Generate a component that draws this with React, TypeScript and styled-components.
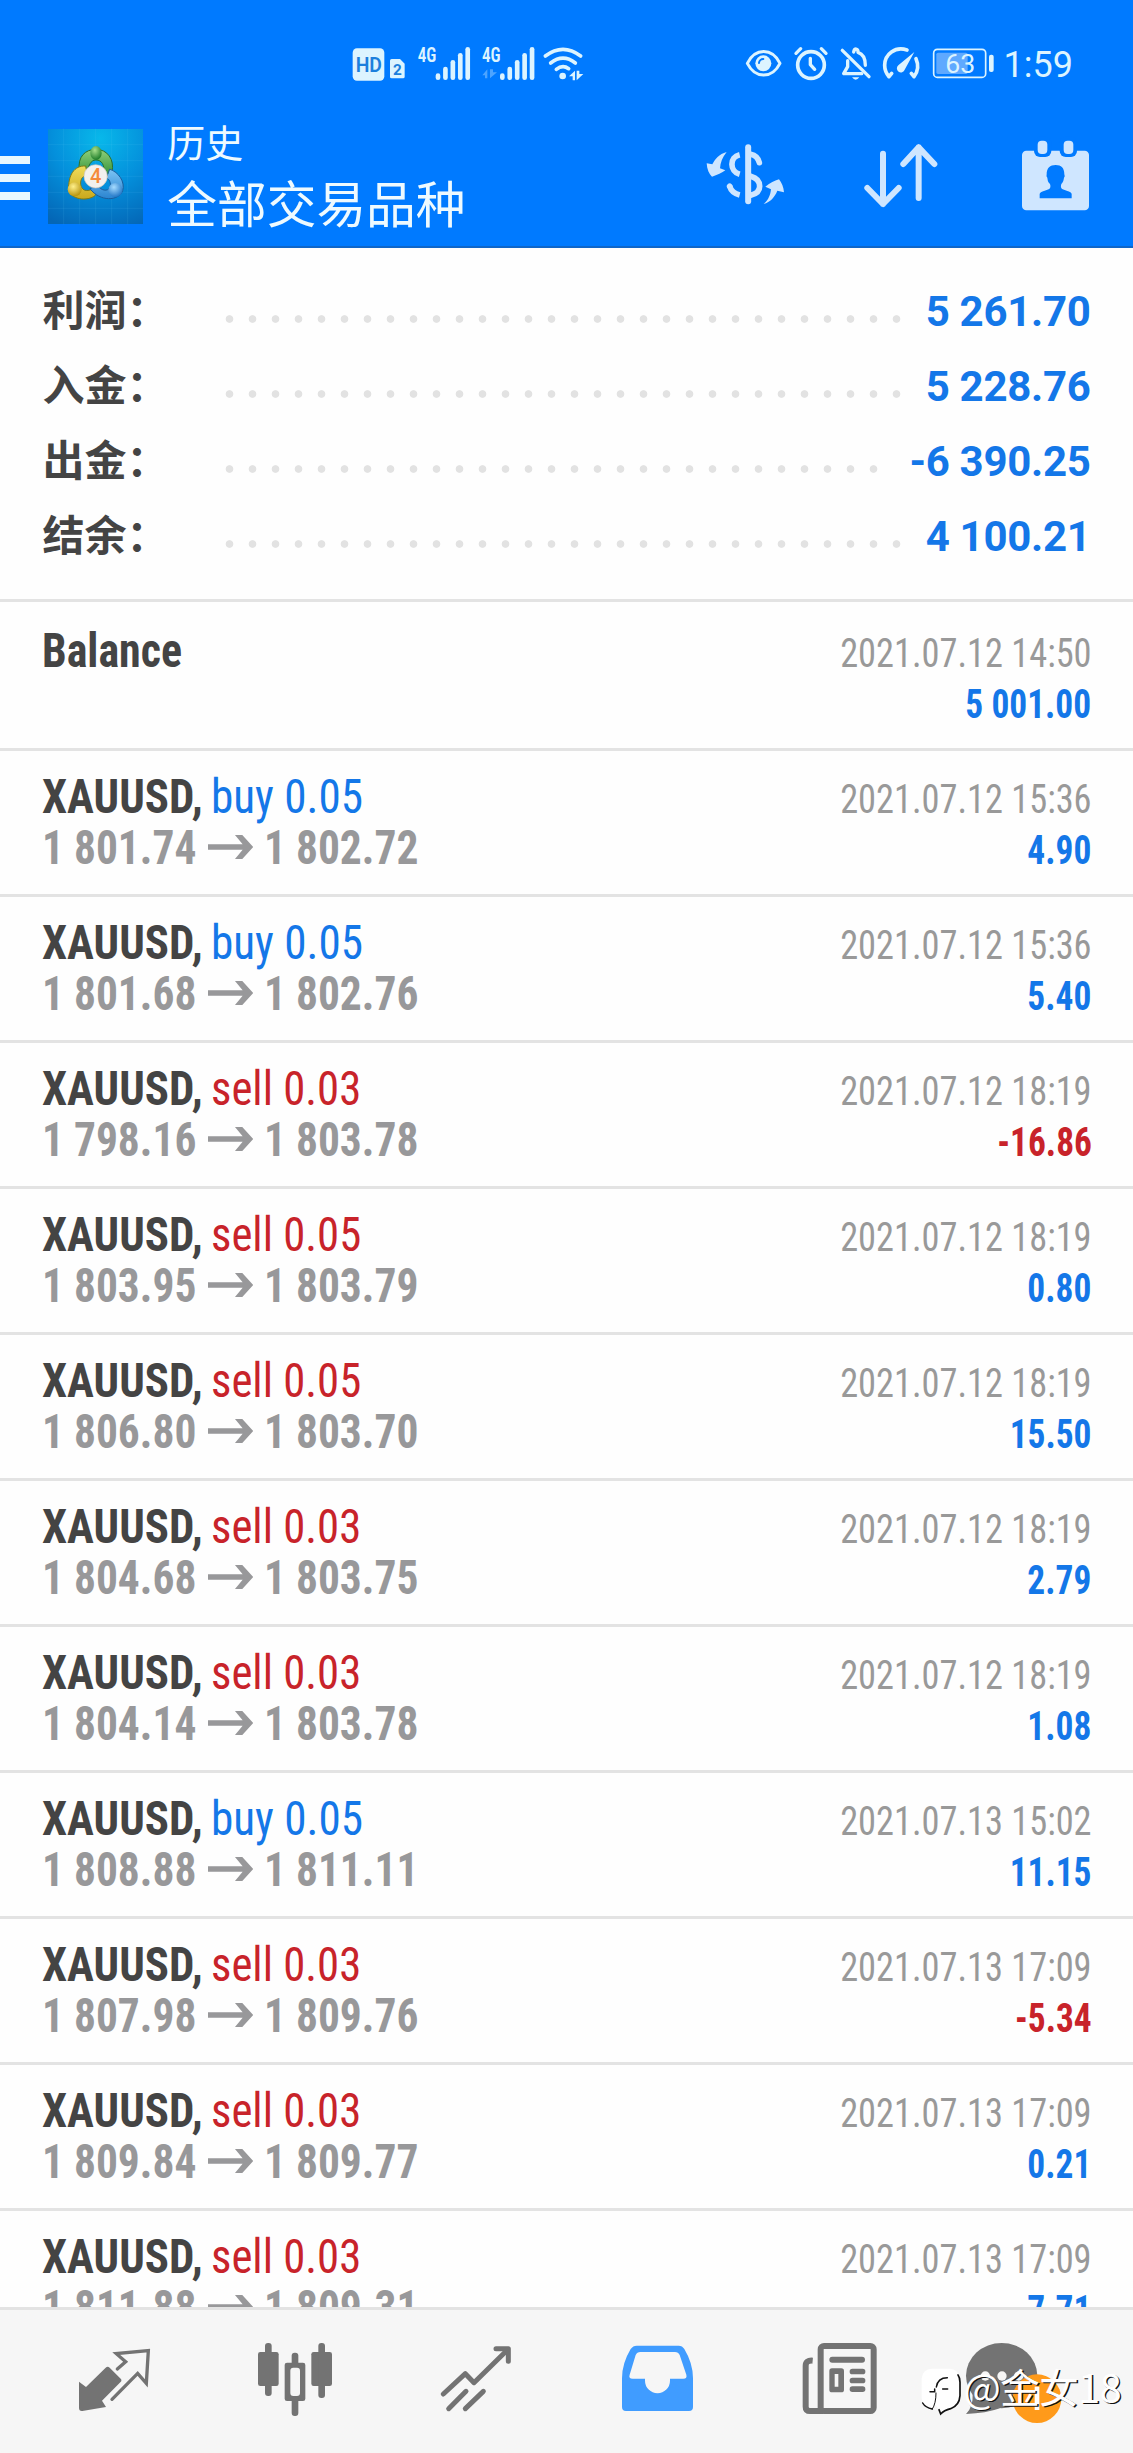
import React from "react";
import styled, { createGlobalStyle } from "styled-components";

const BLUE = "#007aff";
const TINT = "#cfe6ff";
const STATUS = "#dcf4ff";
const GRAY = "#737373";
const BAR_BG = "#f6f6f6";

const condensed = `"Roboto Condensed", Roboto, "Noto Sans CJK SC", sans-serif`;
const regular = `Roboto, "Noto Sans CJK SC", sans-serif`;

const GlobalStyle = createGlobalStyle`
  * { box-sizing: border-box; }
  body { margin: 0; background: #fff; font-family: ${regular}; }
  svg { display: block; flex: none; }
`;

const Screen = styled.div`
  position: relative;
  display: flex;
  flex-direction: column;
  width: 1133px;
  height: 2453px;
  overflow: hidden;
  background: #fefefe;
`;

const TopBar = styled.header`
  flex: none;
  height: 248px;
  background: ${BLUE};
  border-bottom: 2px solid #0f66c9;
`;

const StatusBar = styled.div`
  display: flex;
  height: 110px;
  padding: 30px 0 0 350px;
`;

const StatusGroup = styled.div`
  display: flex;
  & + & {
    margin-left: 155px;
  }
`;

const Clock = styled.span`
  margin-left: 3.5px;
  font-size: 36px;
  line-height: 71px;
  color: ${STATUS};
`;

const TitleBar = styled.div`
  display: flex;
  height: 138px;
`;

const MenuButton = styled.div`
  display: flex;
  flex-direction: column;
  gap: 10px;
  width: 48px;
  padding-top: 46px;
`;

const MenuLine = styled.span`
  width: 30px;
  height: 8px;
  background: #e8f8ff;
`;

const Titles = styled.div`
  margin-left: 24px;
  padding-top: 8px;
  color: #eefaff;
  white-space: nowrap;
  font-family: "Noto Sans CJK SC", sans-serif;
`;

const Caption = styled.div`
  font-size: 38px;
  line-height: 46px;
`;

const Heading = styled.div`
  margin-top: 4.5px;
  font-size: 49.7px;
  line-height: 64px;
`;

const Actions = styled.div`
  display: flex;
  margin-left: auto;
`;

const Summary = styled.section`
  flex: none;
  height: 354px;
  padding: 22px 42.5px 0 42.5px;
  border-bottom: 3px solid #e3e3e3;
`;

const SummaryRow = styled.div`
  display: flex;
  align-items: baseline;
  height: 75px;
  line-height: 75px;
  font-size: 42px;
  font-weight: 700;
`;

const SummaryLabel = styled.span`
  width: 175.3px;
  white-space: nowrap;
  color: #444;
  font-family: "Noto Sans CJK SC", sans-serif;
`;

const Dots = styled.span<{ $count: number }>`
  align-self: flex-start;
  width: ${(p) => p.$count * 23}px;
  height: 8px;
  margin-top: 45px;
  background: radial-gradient(circle at center, #e2e2e2 3.4px, transparent 4.2px) 0 0 / 23px 8px repeat-x;
`;

const SummaryValue = styled.span`
  margin-left: auto;
  white-space: nowrap;
  letter-spacing: -0.3px;
  color: #1477e8;
`;

const List = styled.main`
  flex: 1;
  min-height: 0;
  overflow: hidden;
  font-family: ${condensed};
  line-height: 51px;
  white-space: nowrap;
`;

const Row = styled.article<{ $first?: boolean }>`
  display: flex;
  justify-content: space-between;
  align-items: baseline;
  height: ${(p) => (p.$first ? 149 : 146)}px;
  padding: ${(p) => (p.$first ? 23 : 20)}px 41.5px 0 42px;
  border-bottom: 3px solid #e3e3e3;
`;

const Line = styled.div`
  display: flex;
  align-items: baseline;
  height: 51px;
`;

const RightCell = styled.div`
  display: flex;
  flex-direction: column;
  align-items: flex-end;
  font-size: 40px;
`;

const LeftCell = styled.div`
  font-size: 48px;
`;

const Squeezed = styled.span<{ $x: number }>`
  display: block;
  transform: scaleX(${(p) => p.$x});
  transform-origin: left;
`;

const Symbol = styled(Squeezed)`
  width: 169px;
  font-weight: 700;
  color: #444;
`;

const Side = styled(Squeezed)<{ $kind: "buy" | "sell" }>`
  color: ${(p) => (p.$kind === "buy" ? "#1477e8" : "#c8232a")};
`;

const Price = styled(Squeezed)`
  width: 155.5px;
  font-weight: 700;
  color: #98989a;
`;

const Time = styled(Squeezed)`
  transform-origin: right;
  color: #999;
`;

const Profit = styled(Squeezed)<{ $loss: boolean }>`
  transform-origin: right;
  font-weight: 700;
  color: ${(p) => (p.$loss ? "#c8232a" : "#1477e8")};
`;

const ArrowIcon = styled.svg`
  margin: 0 11px 0 10px;
`;

const TabBar = styled.nav`
  display: flex;
  flex: none;
  height: 146px;
  padding-left: 24px;
  border-top: 3px solid #e3e3e3;
  background: ${BAR_BG};
`;

const Watermark = styled.div`
  position: absolute;
  left: 919px;
  top: 2360px;
  display: flex;
  align-items: flex-start;
  color: #fff;
  font-family: "Noto Sans CJK SC", sans-serif;
  font-size: 39.5px;
  line-height: 52px;
  white-space: nowrap;
  text-shadow: 1.3px 1.3px 0 #111;
`;

const WatermarkText = styled.span`
  margin-left: -1.5px;
  letter-spacing: -0.5px;
`;

const WatermarkSvg = styled.svg`
  margin-top: 5px;
`;

/* Icons are drawn on a 3x grid; the view box starts at (x, y). */
type CellProps = { x: number; y?: number; w: number; h: number; children: React.ReactNode };
const Cell = ({ x, y = 0, w, h, children }: CellProps) => (
  <svg width={w / 3} height={h / 3} viewBox={`${x} ${y} ${w} ${h}`} fill="none" strokeLinecap="round" strokeLinejoin="round">
    {children}
  </svg>
);

const Signal = ({ dx, data }: { dx: number; data?: boolean }) => (
  <g transform={`translate(${dx} 0)`} fill={STATUS}>
    <text x="263" y="95" fontFamily="Roboto Condensed" fontWeight="600" fontSize="60" textLength="56" lengthAdjust="spacingAndGlyphs">4G</text>
    {[130, 110, 90, 69, 51].map((top, i) => (
      <rect key={top} x={317 + i * 22.3} y={top} width="14" height={150 - top} rx="7" />
    ))}
    {data && <path d="M264 136L279 118V145H272V136ZM287 118V145L308 127H296V118Z" opacity=".35" />}
  </g>
);

const StatusIcons = () => (
  <StatusBar>
    <StatusGroup>
      <Cell x={60} w={110} h={210}>
        <rect x="68" y="55" width="95" height="97" rx="13" fill={STATUS} />
        <text x="77" y="125" fill="#1c7fdc" fontFamily="Roboto" fontWeight="600" fontSize="61" textLength="79" lengthAdjust="spacingAndGlyphs">HD</text>
      </Cell>
      <Cell x={170} w={70} h={210}>
        <path d="M184 87H209L223 101V140Q223 145 218 145H184Q179 145 179 140V92Q179 87 184 87Z" fill={STATUS} />
        <text x="188" y="136" fill="#1c7fdc" fontFamily="Roboto" fontWeight="700" fontSize="46">2</text>
      </Cell>
      <Cell x={240} w={200} h={210}><Signal dx={0} /></Cell>
      <Cell x={440} w={185} h={210}><Signal dx={192} data /></Cell>
      <Cell x={625} w={150} h={210}>
        <g stroke={STATUS} strokeWidth="11">
          <path d="M647 78Q700 38 753 78M663 99Q700 70 737 99M680 118Q699 103 717 116" />
        </g>
        <circle cx="699" cy="138" r="10" fill={STATUS} />
        <path d="M718 139L736 122V151H729V139ZM741 122V151L761 132H749V122Z" fill={STATUS} />
      </Cell>
    </StatusGroup>
    <StatusGroup>
      <Cell x={40} w={130} h={210}>
        <path d="M53 100C77 53 127 53 151 100C127 147 77 147 53 100Z" stroke={STATUS} strokeWidth="9" />
        <circle cx="101" cy="100" r="24" fill={STATUS} />
        <path d="M88 99A13 13 0 0 1 101 87" stroke={BLUE} strokeWidth="6" />
      </Cell>
      <Cell x={170} w={135} h={210}>
        <g stroke={STATUS} strokeWidth="11">
          <circle cx="242" cy="105" r="40" />
          <path d="M197 70L211 56M287 70L273 56" strokeWidth="10" />
          <path d="M240 85V104L253 118" strokeWidth="10" />
        </g>
      </Cell>
      <Cell x={305} w={135} h={210}>
        <g stroke={STATUS} strokeWidth="10">
          <path d="M336 61L416 140" />
          <path d="M352 92V110L340 131H394" />
          <path d="M370 66C372 54 384 54 383 67C399 72 405 84 405 106" />
        </g>
        <path d="M365 142H387Q376 156 365 142Z" fill={STATUS} />
      </Cell>
      <Cell x={440} w={145} h={210}>
        <g stroke={STATUS} strokeWidth="11">
          <path d="M530 60C495 48 463 72 463 106C463 120 468 131 476 140L484 130" />
          <path d="M557 86C565 104 563 124 551 140L543 130" />
        </g>
        <path d="M552 66L523 119A12 12 0 1 1 504 106Z" fill={STATUS} />
      </Cell>
      <Cell x={585} w={225} h={210}>
        <rect x="611" y="58" width="156" height="84" rx="11" stroke={STATUS} strokeWidth="5" />
        <rect x="619" y="68" width="94" height="64" rx="5" fill="#7fb9ff" opacity=".75" />
        <rect x="777" y="74" width="14" height="52" rx="6" fill={STATUS} />
        <text x="646" y="128" fill={STATUS} fontFamily="Roboto" fontSize="80">63</text>
      </Cell>
      <Clock>1:59</Clock>
    </StatusGroup>
  </StatusBar>
);

const AppLogo = () => (
  <Cell x={144} w={286} h={414}>
    <defs>
      <radialGradient id="sky" cx=".55" cy=".1" r="1">
        <stop offset="0" stopColor="#08b8ea" />
        <stop offset=".5" stopColor="#0490dc" />
        <stop offset="1" stopColor="#0466b6" />
      </radialGradient>
      <linearGradient id="green" x2="0" y2="1"><stop stopColor="#8fd07a" /><stop offset="1" stopColor="#2f8f35" /></linearGradient>
      <linearGradient id="gold" x2="0" y2="1"><stop stopColor="#f0dc5a" /><stop offset="1" stopColor="#c9a81c" /></linearGradient>
      <linearGradient id="azure" x2="0" y2="1"><stop stopColor="#7cc4f4" /><stop offset="1" stopColor="#2a84d0" /></linearGradient>
      <radialGradient id="gball" cx=".4" cy=".3" r=".7"><stop stopColor="#a8e08c" /><stop offset="1" stopColor="#1f7d2a" /></radialGradient>
      <radialGradient id="yball" cx=".4" cy=".3" r=".7"><stop stopColor="#fff08a" /><stop offset="1" stopColor="#b8940e" /></radialGradient>
      <radialGradient id="bball" cx=".4" cy=".3" r=".7"><stop stopColor="#a6dcff" /><stop offset="1" stopColor="#2478c8" /></radialGradient>
    </defs>
    <rect x="144" y="57" width="285" height="285" fill="url(#sky)" />
    <path d="M191 57V342M239 57V342M287 57V342M335 57V342M383 57V342M144 104H429M144 152H429M144 199H429M144 247H429M144 295H429" stroke="#6fd0f5" strokeOpacity=".18" strokeWidth="2" />
    <path d="M238 180C232 140 256 118 288 118C322 118 344 148 336 186C330 204 310 204 312 190C314 166 306 150 288 150C270 150 268 170 262 176Z" fill="url(#green)" stroke="#2a6d2a" strokeWidth="3" />
    <path d="M256 168C222 166 204 196 206 240C212 268 262 276 286 256C290 246 280 236 270 240C254 246 240 236 242 216C244 200 254 196 262 198Z" fill="url(#gold)" stroke="#7f7a14" strokeWidth="3" />
    <path d="M330 178C356 186 376 216 368 242C356 274 300 276 270 236L292 226C304 242 322 246 330 232C334 220 328 206 320 204Z" fill="url(#azure)" stroke="#1a5c9c" strokeWidth="3" />
    <ellipse cx="288" cy="129" rx="17" ry="21" fill="url(#gball)" />
    <circle cx="224" cy="238" r="21" fill="url(#yball)" />
    <circle cx="346" cy="240" r="21" fill="url(#bball)" />
    <circle cx="287" cy="199" r="35" fill="#f3f1ee" stroke="#c9c4bd" strokeWidth="2" />
    <text x="287" y="220" textAnchor="middle" fill="#f58a3c" fontFamily="Roboto" fontWeight="500" fontSize="60">4</text>
  </Cell>
);

const HeaderActions = () => (
  <Actions>
    <Cell x={70} w={370} h={414}>
      <g fill={TINT}>
        <path d="M141 126C118 132 106 148 98 163L81 160C82 178 88 192 97 200C112 196 128 188 137 181L121 175C122 158 128 142 141 126Z" />
        <path d="M252 282C268 268 272 254 274 238L257 230C272 218 284 212 298 208C306 218 312 232 313 247L293 242C285 262 272 276 252 282Z" />
      </g>
      <g stroke={TINT} strokeWidth="17">
        <path d="M180 134C149 141 149 184 180 193M180 255C164 251 154 243 150 229" strokeLinecap="butt" />
        <path d="M150 229L150.1 229.1" />
        <path d="M205.500 112V274" strokeWidth="18" />
        <path d="M213 133C228 136 236 146 239 158M213 199C231 204 240 215 240 229C240 243 230 252 213 256" />
      </g>
    </Cell>
    <Cell x={440} w={460} h={414}>
      <path d="M608 131V282M561 234L608 282L655 234M715 264V112M669 162L715 112L762 162" stroke={TINT} strokeWidth="18" />
    </Cell>
    <Cell x={900} w={459} h={414}>
      <rect x="1026" y="122" width="201" height="179" rx="13" fill={TINT} />
      <rect x="1062" y="80" width="52" height="61" rx="18" fill={BLUE} />
      <rect x="1139" y="80" width="52" height="61" rx="18" fill={BLUE} />
      <rect x="1073" y="92" width="29" height="40" rx="12" fill={TINT} />
      <rect x="1151" y="92" width="29" height="40" rx="12" fill={TINT} />
      <path d="M1079 265V252Q1079 246 1094 242L1106 238Q1114 234 1110 222C1103 216 1103 209 1102 203Q1098 200 1100 193C1100 174 1110 165 1127 165C1144 165 1153 174 1153 193Q1156 200 1152 203C1151 209 1150 216 1144 222Q1140 234 1148 238L1160 242Q1175 246 1175 252V265Z" fill={BLUE} />
    </Cell>
  </Actions>
);

const TabIcons = () => (
  <TabBar>
    <Cell x={-138} y={-60} w={543} h={429}>
      <path d="M27 155L48 171L107 113Q113 107 119 113L152 146Q157 151 151 157L96 212L108 231L37 243Q27 244 27 234Z" fill={GRAY} />
      <path d="M142 117L167 95L139 71L235 62L229 160L203 130L126 208" stroke={GRAY} strokeWidth="10" strokeLinejoin="miter" />
    </Cell>
    <Cell x={405} y={-60} w={543} h={429}>
      <g fill={GRAY}>
        <rect x="564" y="66" width="62" height="102" rx="7" />
        <rect x="585" y="39" width="20" height="159" rx="9" />
        <rect x="644" y="98" width="62" height="115" rx="7" />
        <rect x="665" y="68" width="20" height="190" rx="9" />
        <rect x="724" y="66" width="62" height="102" rx="7" />
        <rect x="745" y="39" width="20" height="165" rx="9" />
      </g>
      <rect x="661" y="113" width="29" height="85" rx="9" fill={BAR_BG} />
    </Cell>
    <Cell x={948} y={-60} w={543} h={429}>
      <g stroke={GRAY} strokeWidth="15">
        <path d="M1120 192L1186 131L1212 158L1312 60" />
        <path d="M1278 56H1315V94" />
        <path d="M1136 236L1188 184M1186 236L1240 184" />
      </g>
    </Cell>
    <Cell x={-129} y={-60} w={543} h={429}>
      <path d="M80 47H206Q217 47 223 57Q249 100 249 145V231Q249 243 237 243H48Q36 243 36 231V145Q36 100 62 57Q69 47 80 47Z" fill="#409cff" />
      <path d="M91 66H195Q205 66 209 75L229 134Q232 146 220 146H180V152A37.500 37.500 0 0 1 105 152V146H68Q55 146 59 134L77 75Q81 66 91 66Z" fill={BAR_BG} />
    </Cell>
    <Cell x={414} y={-60} w={543} h={429}>
      <path d="M608 92Q587 90 587 108V230Q587 243 600 243H640" stroke={GRAY} strokeWidth="18" strokeLinecap="butt" />
      <rect x="632" y="48" width="159" height="195" rx="10" stroke={GRAY} strokeWidth="18" />
      <g fill={GRAY}>
        <rect x="658" y="80" width="107" height="18" rx="9" />
        <path fillRule="evenodd" d="M666 115H694Q702 115 702 123V179Q702 187 694 187H666Q658 187 658 179V123Q658 115 666 115ZM674 132V170H685V132Z" />
        <rect x="719" y="116" width="47" height="17" rx="8" />
        <rect x="719" y="143" width="47" height="17" rx="8" />
        <rect x="719" y="169" width="47" height="17" rx="8" />
      </g>
    </Cell>
    <Cell x={87} y={-60} w={543} h={429}>
      <ellipse cx="305" cy="137" rx="107" ry="98" fill={GRAY} />
      <path d="M198 252Q220 232 218 190L300 235Q258 250 198 252Z" fill={GRAY} />
      <circle cx="256" cy="138" r="14" fill={BAR_BG} />
      <circle cx="306" cy="138" r="14" fill={BAR_BG} />
      <circle cx="356" cy="138" r="14" fill={BAR_BG} />
      <circle cx="411" cy="206" r="73" fill="#ff9a1a" />
      <rect x="404" y="170" width="14" height="70" fill="#fff" />
    </Cell>
  </TabBar>
);

const WatermarkLogo = () => (
  <WatermarkSvg width="46" height="56" viewBox="57 106 138 168" fill="none" strokeLinecap="round">
    <path d="M96 117H150Q178 120 178 146V200Q176 228 150 236Q130 240 121 252L117 238L106 226Q98 238 88 240Q66 226 65 204V146Q68 118 96 117Z" fill="#fff" />
    <path d="M174 136Q180 144 180 158V198Q178 228 152 237Q132 242 122 253L117 240" stroke="#111" strokeWidth="5" />
    <path d="M68 220Q76 234 97 238M90 186H104V178M128 178H143M109 172Q113 144 142 144" stroke="#111" strokeWidth="4.500" />
    <path d="M108 190Q108 222 97 238" stroke="#111" strokeWidth="3" />
  </WatermarkSvg>
);

const totals = [
  { label: "利润：", value: "5 261.70", dots: 30 },
  { label: "入金：", value: "5 228.76", dots: 30 },
  { label: "出金：", value: "-6 390.25", dots: 29 },
  { label: "结余：", value: "4 100.21", dots: 30 },
];

type Deal = { side: "buy" | "sell"; lot: string; open: string; close: string; time: string; profit: string };
const deals: Deal[] = [
  { side: "buy", lot: "0.05", open: "1 801.74", close: "1 802.72", time: "2021.07.12 15:36", profit: "4.90" },
  { side: "buy", lot: "0.05", open: "1 801.68", close: "1 802.76", time: "2021.07.12 15:36", profit: "5.40" },
  { side: "sell", lot: "0.03", open: "1 798.16", close: "1 803.78", time: "2021.07.12 18:19", profit: "-16.86" },
  { side: "sell", lot: "0.05", open: "1 803.95", close: "1 803.79", time: "2021.07.12 18:19", profit: "0.80" },
  { side: "sell", lot: "0.05", open: "1 806.80", close: "1 803.70", time: "2021.07.12 18:19", profit: "15.50" },
  { side: "sell", lot: "0.03", open: "1 804.68", close: "1 803.75", time: "2021.07.12 18:19", profit: "2.79" },
  { side: "sell", lot: "0.03", open: "1 804.14", close: "1 803.78", time: "2021.07.12 18:19", profit: "1.08" },
  { side: "buy", lot: "0.05", open: "1 808.88", close: "1 811.11", time: "2021.07.13 15:02", profit: "11.15" },
  { side: "sell", lot: "0.03", open: "1 807.98", close: "1 809.76", time: "2021.07.13 17:09", profit: "-5.34" },
  { side: "sell", lot: "0.03", open: "1 809.84", close: "1 809.77", time: "2021.07.13 17:09", profit: "0.21" },
  { side: "sell", lot: "0.03", open: "1 811.88", close: "1 809.31", time: "2021.07.13 17:09", profit: "7.71" },
];

const Result = ({ time, profit }: { time: string; profit: string }) => (
  <RightCell>
    <Time $x={0.909}>{time}</Time>
    <Profit $x={0.885} $loss={profit.startsWith("-")}>{profit}</Profit>
  </RightCell>
);

const DealRow = ({ side, lot, open, close, time, profit }: Deal) => (
  <Row>
    <LeftCell>
      <Line>
        <Symbol $x={0.935}>XAUUSD,</Symbol>
        <Side $x={side === "buy" ? 0.94 : 0.932} $kind={side}>{side} {lot}</Side>
      </Line>
      <Line>
        <Price $x={0.905}>{open}</Price>
        <ArrowIcon width="45.3" height="30" viewBox="624 702 136 90">
          <path d="M624 733H728L705 705H727L760 741L727 777H705L728 749H624Z" fill="#98989a" />
        </ArrowIcon>
        <Price $x={0.905}>{close}</Price>
      </Line>
    </LeftCell>
    <Result time={time} profit={profit} />
  </Row>
);

export default function App() {
  return (
    <Screen>
      <GlobalStyle />
      <TopBar>
        <StatusIcons />
        <TitleBar>
          <MenuButton>
            <MenuLine />
            <MenuLine />
            <MenuLine />
          </MenuButton>
          <AppLogo />
          <Titles>
            <Caption>历史</Caption>
            <Heading>全部交易品种</Heading>
          </Titles>
          <HeaderActions />
        </TitleBar>
      </TopBar>
      <Summary>
        {totals.map((t) => (
          <SummaryRow key={t.label}>
            <SummaryLabel>{t.label}</SummaryLabel>
            <Dots $count={t.dots} />
            <SummaryValue>{t.value}</SummaryValue>
          </SummaryRow>
        ))}
      </Summary>
      <List>
        <Row $first>
          <LeftCell>
            <Symbol $x={0.915}>Balance</Symbol>
          </LeftCell>
          <Result time="2021.07.12 14:50" profit="5 001.00" />
        </Row>
        {deals.map((d, i) => (
          <DealRow key={i} {...d} />
        ))}
      </List>
      <TabIcons />
      <Watermark>
        <WatermarkLogo />
        <WatermarkText>@金女18</WatermarkText>
      </Watermark>
    </Screen>
  );
}
